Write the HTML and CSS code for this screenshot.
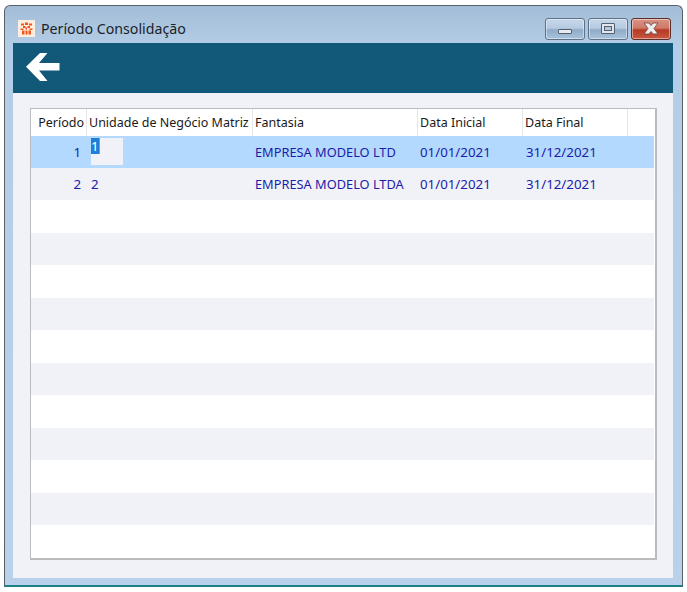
FILE: index.html
```html
<!DOCTYPE html>
<html lang="pt">
<head>
<meta charset="utf-8">
<title>Período Consolidação</title>
<link rel="stylesheet" href="styles.css">
</head>
<body>
<div class="window">
  <div class="titlebar">
    <div class="app-icon">
      <svg width="15" height="15" viewBox="0 0 15 15"><rect width="15" height="15" fill="#fdeee0"/><g fill="#f2561d"><path d="M2 2.500h3v2H2zM6 1.500h3v2.500H6zM10 2.500h3v2h-3zM4 5h2.500v2H4zM8.500 5H11v2H8.500zM1.500 7.500h3V9h-3zM6.500 6.500H8v2H6.500zM10.500 7.500h3V9h-3zM3 9.500h2.500v4H3zM6.500 9.500H8.500v4h-2zM9.500 9.500H12v4H9.500z"/></g></svg>
    </div>
    <span class="title">Período Consolidação</span>
    <div class="controls">
      <div class="ctl"><span class="glyph-min"></span></div>
      <div class="ctl"><span class="glyph-max"></span></div>
      <div class="ctl close">
        <svg width="20" height="13" viewBox="0 0 20 13"><path d="M3 1h5l2 2.500L12 1h5l-4 5.500 4 5.500h-5l-2-2.500L8 12H3l4-5.500z" fill="#eeecec" stroke="#70403a" stroke-width=".8"/></svg>
      </div>
    </div>
  </div>
  <div class="client">
    <div class="toolbar">
      <svg class="back" width="36" height="30" viewBox="0 0 36 30"><path d="M15 1h7.500L14 11h20.500v7.500H14L22.500 29H15L1 14.800z" fill="#fff"/></svg>
    </div>
    <div class="body">
      <div class="grid">
        <div class="row head">
          <div class="c c1">Período</div><div class="c c2">Unidade de Negócio Matriz</div><div class="c c3">Fantasia</div><div class="c c4">Data Inicial</div><div class="c c5">Data Final</div><div class="c c6"></div>
        </div>
        <div class="row data sel">
          <div class="c c1 num">1</div>
          <div class="c c2"><span class="editor"><span class="caret">1</span></span></div>
          <div class="c c3">EMPRESA MODELO LTD</div><div class="c c4">01/01/2021</div><div class="c c5">31/12/2021</div><div class="c c6"></div>
        </div>
        <div class="row data alt">
          <div class="c c1 num">2</div><div class="c c2">2</div><div class="c c3">EMPRESA MODELO LTDA</div><div class="c c4">01/01/2021</div><div class="c c5">31/12/2021</div><div class="c c6"></div>
        </div>
        <div class="row data"></div><div class="row data alt"></div>
        <div class="row data"></div><div class="row data alt"></div>
        <div class="row data"></div><div class="row data alt"></div>
        <div class="row data"></div><div class="row data alt"></div>
        <div class="row data"></div><div class="row data alt"></div>
        <div class="row data"></div>
      </div>
    </div>
  </div>
</div>
</body>
</html>
```
FILE: styles.css
```css
html, body { margin: 0; padding: 0; background: #fff; }
body { width: 687px; height: 592px; overflow: hidden; font-family: "Noto Sans", sans-serif; }
.window {
  box-sizing: border-box;
  width: 679px; height: 582px;
  margin: 5px 0 0 4px;
  border: 1px solid #5a6066;
  border-bottom: 2px solid #1f7f86;
  border-radius: 6px 6px 0 0;
  background: linear-gradient(#a3bdd8 0, #b4cde6 40px, #b9d1ea 100%);
  padding: 0 9px 8px 8px;
  display: flex; flex-direction: column;
}
.titlebar { height: 37px; display: flex; align-items: center; flex: none; padding-top: 8px; box-sizing: border-box; }
.app-icon { width: 17px; height: 17px; margin: 0 6px 0 5px; display: flex; align-items: center; justify-content: center; background: #fdeee0; }
.title { font-size: 14.2px; color: #1a1f29; }
.controls { margin-left: auto; display: flex; gap: 3px; margin-right: 2px; }
.ctl {
  box-sizing: border-box; width: 40px; height: 22px;
  border: 1px solid #5f7186; border-radius: 3px;
  background: linear-gradient(#c5d7ea 0, #b7cbe1 45%, #8fabc8 55%, #a9c3dc 100%);
  box-shadow: inset 0 0 0 1px rgba(255,255,255,.45);
  display: flex; align-items: center; justify-content: center;
}
.ctl.close { background: linear-gradient(#d99384 0, #cf7a68 45%, #b53a24 55%, #c9583f 100%); border-color: #5c2f2b; }
.glyph-min { width: 14px; height: 5px; margin-top: 5px; background: #e6ebf1; border: 1px solid #54606e; box-sizing: border-box; border-radius: 1px; }
.glyph-max { width: 14px; height: 11px; background: #dfe6ee; border: 1px solid #54606e; box-sizing: border-box; border-radius: 1px; position: relative; }
.glyph-max::after { content: ""; position: absolute; left: 2px; right: 2px; top: 2px; bottom: 2px; border: 1px solid #54606e; background: #b5c8dc; box-sizing: border-box; }
.client { flex: 1; display: flex; flex-direction: column; background: #f0f2f8; }
.toolbar { height: 50px; background: #125878; flex: none; display: flex; align-items: center; padding-left: 12px; }
.back { display: block; margin-top: -2px; }
.body { flex: 1; padding: 15px 16px 18px 17px; }
.grid {
  box-sizing: border-box; width: 627px; height: 452px;
  border: solid #bcbcbc; border-width: 1px 2px 2px 1px;
  background: #fff; padding-right: 1px;
}
.row { display: flex; }
.head { height: 26.57px; background: #fff; }
.head .c { font-size: 12.5px; color: #1a1a1a; border-right: 1px solid #e6e6e6; line-height: 27px; }
.data { height: 32.46px; color: #1c1ca8; background: #fff; line-height: 32px; }
.data.alt { background: #f0f2f8; }
.data.sel { background: #b3d9ff; }
.c { padding-left: 2px; box-sizing: border-box; flex: none; white-space: nowrap; overflow: hidden; }
.c1 { width: 56px; }
.c2 { width: 166px; }
.c3 { width: 165px; }
.c4 { width: 105px; }
.c5 { width: 105px; }
.c6 { width: 29px; }
.head .c6 { border-right: 0; }
.head .c1 { text-align: right; padding-right: 2px; padding-left: 0; }
.data .c { font-size: 13.3px; }
.data .c2 { padding-left: 4px; }
.data .c3 { font-size: 12.8px; }
.data .c5 { padding-left: 3px; }
.data .num { text-align: right; padding-right: 6px; padding-left: 0; }
.editor { display: block; width: 32px; height: 27px; margin-top: 2px; background: #f0f2f8; line-height: 14px; }
.caret { display: inline-block; vertical-align: top; background: #1f7fd6; color: #fff; height: 16px; line-height: 16px; border-right: 1px solid #d8843c; }
```
